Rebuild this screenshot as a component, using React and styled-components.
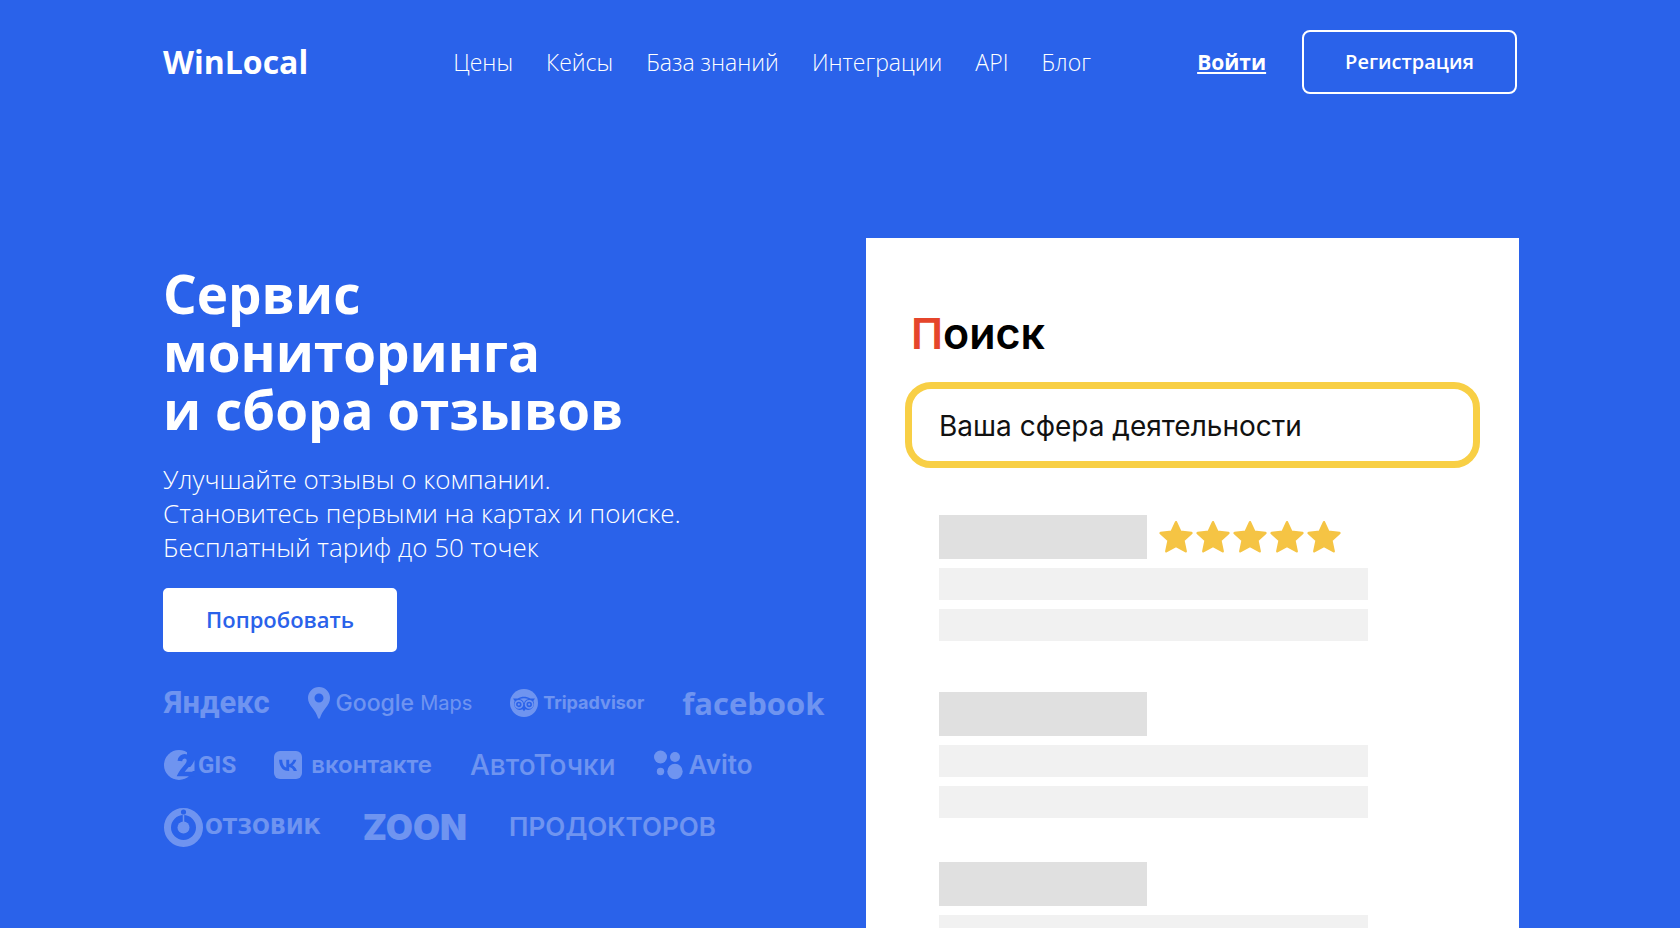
import React from 'react';
import styled, { createGlobalStyle } from 'styled-components';

const blue = '#2a62ea';

const GlobalStyle = createGlobalStyle`
  *, *::before, *::after { box-sizing: border-box; }
  body {
    margin: 0;
    background: ${blue};
    color: #fff;
    font-family: 'Open Sans', 'Noto Sans', sans-serif;
  }
`;

const Page = styled.div`
  height: 100vh;
  min-height: 860px;
  overflow: hidden;
  padding: 30px 161px 0 163px;
  display: flex;
  flex-direction: column;
`;

const Header = styled.header`
  display: flex;
  align-items: center;
  margin-bottom: 144px;
  padding-right: 2px;
`;

const Brand = styled.a`
  color: inherit;
  text-decoration: none;
  font-size: 32px;
  line-height: 64px;
  font-weight: 700;
`;

const Nav = styled.nav`
  display: flex;
  gap: 33px;
  margin-left: 145px;
`;

const NavLink = styled.a`
  color: #fff;
  text-decoration: none;
  font-size: 23px;
  line-height: 32px;
  font-weight: 300;
`;

const Actions = styled.div`
  display: flex;
  align-items: center;
  gap: 36px;
  margin-left: auto;
`;

const LoginLink = styled.a`
  color: #fff;
  font-size: 21px;
  line-height: 32px;
  font-weight: 700;
  text-decoration-thickness: 2px;
  text-underline-offset: 2px;
`;

const Button = styled.button`
  height: 64px;
  padding: 0 41px 2px;
  border: 2px solid #fff;
  border-radius: ${(p) => (p.$filled ? '5px' : '8px')};
  background: ${(p) => (p.$filled ? '#fff' : 'transparent')};
  color: ${(p) => (p.$filled ? blue : '#fff')};
  font: 600 ${(p) => (p.$filled ? '22px' : '20px')} 'Open Sans', sans-serif;
  cursor: pointer;
`;

const Hero = styled.main`
  flex: 1;
  min-height: 0;
  display: grid;
  grid-template-columns: minmax(0, 1fr) 653px;
`;

const Intro = styled.section`
  padding-top: 27px;
`;

const Title = styled.h1`
  margin: 0 0 23px;
  font-size: 53px;
  line-height: 58px;
  font-weight: 700;
`;

const Lead = styled.p`
  margin: 0 0 24px;
  font-size: 26px;
  line-height: 34px;
  font-weight: 300;
`;

const Partners = styled.div`
  display: flex;
  flex-direction: column;
  gap: 22px;
  margin-top: 31px;
  opacity: 0.32;
`;

const PartnerRow = styled.div`
  display: flex;
  align-items: center;
  gap: ${(p) => (p.$wide ? '42px' : '38px')};
  height: 40px;
  padding-left: 1px;
`;

const Partner = styled.div`
  display: flex;
  align-items: center;
  gap: ${(p) => p.$gap || 0}px;
  white-space: nowrap;
`;

const Wordmark = styled.span`
  font-family: ${(p) => p.$family || 'Inter'}, 'Open Sans', sans-serif;
  font-size: ${(p) => p.$size}px;
  font-weight: ${(p) => p.$weight || 700};
  line-height: 40px;
`;

const SearchCard = styled.section`
  padding: 65px 39px 0;
  background: #fff;
  color: #000;
  font-family: Inter, sans-serif;
  overflow: hidden;
`;

const SearchLabel = styled.label`
  display: block;
  margin: 0 0 19px 6px;
  font-size: 43px;
  line-height: 60px;
  font-weight: 600;

  &::first-letter {
    color: #e5452b;
  }
`;

const SearchInput = styled.input`
  display: block;
  width: 100%;
  height: 86px;
  padding: 2px 27px 0;
  border: 7px solid #f8cf45;
  border-radius: 26px;
  background: #fff;
  color: #111;
  font: 400 28px Inter, sans-serif;
  outline: none;
`;

const Results = styled.div`
  display: flex;
  flex-direction: column;
  padding: 47px 0 0 34px;
`;

const Result = styled.article`
  display: flex;
  flex-direction: column;
  gap: 9px;
  margin-bottom: ${(p) => (p.$rated ? '51px' : '44px')};
`;

const ResultHead = styled.div`
  display: flex;
  align-items: center;
  gap: 12px;
`;

const NameBar = styled.div`
  width: 208px;
  height: 44px;
  background: #e0e0e0;
`;

const TextBar = styled.div`
  width: 429px;
  height: 32px;
  background: #f1f1f1;
`;

const Stars = styled.div`
  display: flex;
  gap: 3px;
`;

const Star = () => (
  <svg width="34" height="34" viewBox="0 0 34 34" aria-hidden="true">
    <path
      d="M17 2.200l4.400 9.600 11 1.200-8 7.300 2.300 11L17 26l-9.700 5.300 2.300-11-8-7.300 11-1.200z"
      fill="#f5c444"
      stroke="#f5c444"
      strokeWidth="2.400"
      strokeLinejoin="round"
    />
  </svg>
);

const MapPin = () => (
  <svg width="22" height="32" viewBox="0 0 22 32" aria-hidden="true">
    <path
      fill="#fff"
      fillRule="evenodd"
      d="M11 0a11 11 0 0 1 11 11c0 4-1.800 6.600-4.600 10.200C14.800 24.600 13 27.500 12.100 30.800c-.4 1.400-1.800 1.400-2.200 0C9 27.500 7.200 24.600 4.600 21.200 1.800 17.600 0 15 0 11A11 11 0 0 1 11 0zm0 6.500a4.500 4.500 0 1 0 0 9 4.500 4.500 0 0 0 0-9z"
    />
  </svg>
);

const OwlMark = () => (
  <svg width="28" height="28" viewBox="0 0 28 28" aria-hidden="true">
    <circle cx="14" cy="14" r="14" fill="#fff" />
    <path
      d="M3 9.500h4.700C11.500 7.200 16.500 7.200 20.300 9.500H25l-1.700 2.500a6 6 0 0 1-7.700 8.300L14 22.200l-1.600-1.900A6 6 0 0 1 4.700 12z"
      fill={blue}
    />
    <path d="M9.500 10c2.800-1.100 6.200-1.100 9 0-2.400.5-4 2.100-4.500 4.500-.5-2.400-2.100-4-4.500-4.500z" fill="#fff" />
    <circle cx="8.800" cy="15.400" r="3.600" fill="none" stroke="#fff" strokeWidth="1.700" />
    <circle cx="19.200" cy="15.400" r="3.600" fill="none" stroke="#fff" strokeWidth="1.700" />
    <circle cx="8.800" cy="15.400" r="1.100" fill="#fff" />
    <circle cx="19.200" cy="15.400" r="1.100" fill="#fff" />
  </svg>
);

const GisMark = () => (
  <svg width="31" height="30" viewBox="0 0 31 30" aria-hidden="true">
    <circle cx="15" cy="15" r="15" fill="#fff" />
    <path d="M23 0h8v10l-3 7h-5z" fill={blue} />
    <path
      d="M15.800 11C16.500 4.800 25 4.800 25 10.800c0 4.600-5.800 7.700-8.600 13.200H31"
      fill="none"
      stroke={blue}
      strokeWidth="4.600"
    />
    <path d="M30.500 10v11h-8.200c3.600-3.500 6.600-6.500 8.200-11z" fill="#fff" />
  </svg>
);

const VkMark = () => (
  <svg width="28" height="28" viewBox="0 0 28 28" aria-hidden="true">
    <rect width="28" height="28" rx="6" fill="#fff" />
    <path
      fill={blue}
      d="M14.900 20C8.800 20 5.300 15.800 5.100 8.800h3.100c.1 5.100 2.300 7.300 4.100 7.700V8.800h2.900v4.400c1.700-.2 3.600-2.200 4.200-4.400h2.900c-.5 2.700-2.500 4.700-3.900 5.500 1.400.7 3.700 2.400 4.500 5.700h-3.200c-.7-2.100-2.400-3.800-4.500-4V20z"
    />
  </svg>
);

const AvitoMark = () => (
  <svg width="29" height="30" viewBox="0 0 29 30" aria-hidden="true" fill="#fff">
    <circle cx="6.500" cy="7" r="6.500" />
    <circle cx="21" cy="7" r="5" />
    <circle cx="6.500" cy="21.500" r="3.700" />
    <circle cx="21" cy="21.500" r="7.700" />
  </svg>
);

const OtzovikMark = () => (
  <svg width="39" height="39" viewBox="0 0 39 39" aria-hidden="true">
    <circle cx="19.500" cy="19.500" r="16" fill="none" stroke="#fff" strokeWidth="7" />
    <circle cx="19.500" cy="4" r="2.600" fill={blue} />
    <path d="M19.500 7v10" stroke="#fff" strokeWidth="1.500" />
    <circle cx="19.500" cy="19.500" r="6" fill="#fff" />
  </svg>
);

const links = ['Цены', 'Кейсы', 'База знаний', 'Интеграции', 'API', 'Блог'];
const results = [{ id: 1, stars: 5 }, { id: 2, stars: 0 }, { id: 3, stars: 0 }];

export default function App() {
  return (
    <Page>
      <GlobalStyle />
      <Header>
        <Brand href="#">WinLocal</Brand>
        <Nav>
          {links.map((label) => (
            <NavLink href="#" key={label}>{label}</NavLink>
          ))}
        </Nav>
        <Actions>
          <LoginLink href="#">Войти</LoginLink>
          <Button type="button">Регистрация</Button>
        </Actions>
      </Header>
      <Hero>
        <Intro>
          <Title>Сервис<br />мониторинга<br />и сбора отзывов</Title>
          <Lead>
            Улучшайте отзывы о компании.<br />
            Становитесь первыми на картах и поиске.<br />
            Бесплатный тариф до 50 точек
          </Lead>
          <Button type="button" $filled>Попробовать</Button>
          <Partners>
            <PartnerRow>
              <Partner>
                <Wordmark $family="Roboto" $size={31}>Яндекс</Wordmark>
              </Partner>
              <Partner $gap={6}>
                <MapPin />
                <Wordmark $size={23} $weight={500}>Google</Wordmark>
                <Wordmark $size={20} $weight={400}>Maps</Wordmark>
              </Partner>
              <Partner $gap={5}>
                <OwlMark />
                <Wordmark $size={18}>Tripadvisor</Wordmark>
              </Partner>
              <Partner>
                <Wordmark $family="'Open Sans'" $size={31}>facebook</Wordmark>
              </Partner>
            </PartnerRow>
            <PartnerRow>
              <Partner $gap={3}>
                <GisMark />
                <Wordmark $family="Roboto" $size={24}>GIS</Wordmark>
              </Partner>
              <Partner $gap={9}>
                <VkMark />
                <Wordmark $size={24} $weight={600}>вконтакте</Wordmark>
              </Partner>
              <Partner>
                <Wordmark $size={28} $weight={500}>АвтоТочки</Wordmark>
              </Partner>
              <Partner $gap={6}>
                <AvitoMark />
                <Wordmark $size={26} $weight={600}>Avito</Wordmark>
              </Partner>
            </PartnerRow>
            <PartnerRow $wide>
              <Partner $gap={2}>
                <OtzovikMark />
                <Wordmark $family="'DejaVu Sans'" $size={21}>ОТЗОВИК</Wordmark>
              </Partner>
              <Partner>
                <Wordmark $size={35} $weight={900}>ZOON</Wordmark>
              </Partner>
              <Partner>
                <Wordmark $size={26} $weight={600}>ПРОДОКТОРОВ</Wordmark>
              </Partner>
            </PartnerRow>
          </Partners>
        </Intro>
        <SearchCard>
          <SearchLabel htmlFor="sphere">Поиск</SearchLabel>
          <SearchInput id="sphere" type="text" defaultValue="Ваша сфера деятельности" />
          <Results>
            {results.map((r) => (
              <Result key={r.id} $rated={r.stars > 0}>
                <ResultHead>
                  <NameBar />
                  {r.stars > 0 && (
                    <Stars>
                      {Array.from({ length: r.stars }, (_, i) => <Star key={i} />)}
                    </Stars>
                  )}
                </ResultHead>
                <TextBar />
                <TextBar />
              </Result>
            ))}
          </Results>
        </SearchCard>
      </Hero>
    </Page>
  );
}
